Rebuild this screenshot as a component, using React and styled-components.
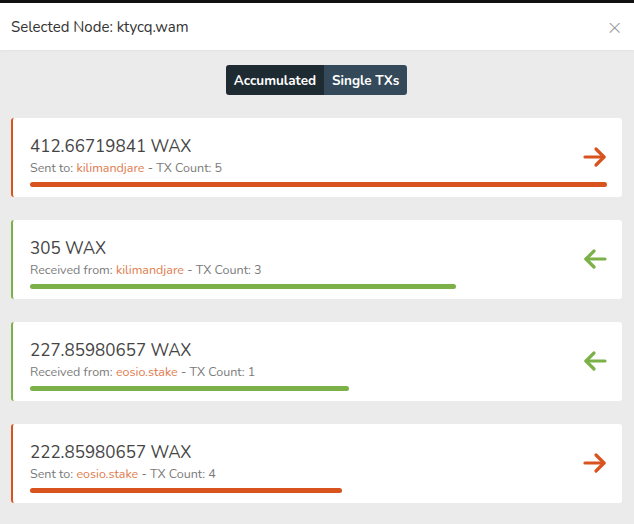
import React, { useState } from 'react';
import styled, { createGlobalStyle } from 'styled-components';

const Global = createGlobalStyle`
  html, body {
    margin: 0;
    padding: 0;
    background: #ebebeb;
    font-family: "Nunito", "Lato", "Open Sans", sans-serif;
  }
`;

const ORANGE = '#d9531e';
const GREEN = '#7cb048';

const Frame = styled.div`
  width: 634px;
  height: 524px;
  overflow: hidden;
  border-top: 3px solid #111;
  box-sizing: border-box;
  background: #ebebeb;
`;

const Header = styled.header`
  height: 47px;
  background: #fff;
  display: flex;
  align-items: center;
  justify-content: space-between;
  padding: 0 11px;
  box-shadow: 0 1px 2px rgba(0, 0, 0, 0.04);
`;

const Title = styled.h5`
  margin: 0;
  font-size: 15px;
  font-weight: 400;
  color: #333;
`;

const Close = styled.button`
  border: 0;
  background: none;
  padding: 0;
  color: #999;
  font-size: 20px;
  line-height: 1;
  cursor: pointer;
  font-family: "DejaVu Sans", sans-serif;
  font-weight: 300;
`;

const Body = styled.main`
  padding: 15px 12px 0 11px;
  display: flex;
  flex-direction: column;
`;

const Toggle = styled.div`
  align-self: center;
  display: flex;
  border-radius: 3px;
  overflow: hidden;
  margin-bottom: 23px;
`;

const ToggleBtn = styled.button`
  border: 0;
  height: 30px;
  padding: 0 8px;
  font-family: inherit;
  font-size: 13.5px;
  font-weight: 700;
  color: #fff;
  background: ${p => (p.$active ? '#1f2b33' : '#34495a')};
  cursor: pointer;
`;

const List = styled.div`
  display: flex;
  flex-direction: column;
  gap: 23px;
`;

const Card = styled.div`
  background: #fff;
  border-left: 2px solid ${p => p.$color};
  border-radius: 3px;
  height: 79px;
  box-sizing: border-box;
  padding: 19px 15px 0 17px;
  display: grid;
  grid-template-columns: 1fr auto;
  grid-template-rows: auto auto auto;
  align-content: start;
`;

const Amount = styled.div`
  font-size: 17px;
  color: #444;
  line-height: 20px;
`;

const Meta = styled.div`
  font-size: 12.5px;
  color: #7a7a7a;
  line-height: 16px;
  margin-top: 3px;
`;

const Peer = styled.span`
  color: #e07b4d;
`;

const Arrow = styled.div`
  grid-row: 1 / 3;
  grid-column: 2;
  align-self: center;
  display: flex;
`;

const Bar = styled.div`
  grid-column: 1 / 3;
  height: 5px;
  border-radius: 3px;
  margin-top: 6px;
  background: ${p => p.$color};
`;

const ArrowIcon = ({ dir, color }) => (
  <svg width="24" height="24" viewBox="0 0 24 24" fill="none" stroke={color} strokeWidth="3.2" strokeLinecap="round" strokeLinejoin="round">
    {dir === 'out' ? (
      <>
        <path d="M2 12h19" />
        <path d="M13 4l8 8-8 8" />
      </>
    ) : (
      <>
        <path d="M22 12H3" />
        <path d="M11 4l-8 8 8 8" />
      </>
    )}
  </svg>
);

const txs = [
  { amount: '412.66719841', dir: 'out', peer: 'kilimandjare', count: 5 },
  { amount: '305', dir: 'in', peer: 'kilimandjare', count: 3 },
  { amount: '227.85980657', dir: 'in', peer: 'eosio.stake', count: 1 },
  { amount: '222.85980657', dir: 'out', peer: 'eosio.stake', count: 4 },
];

const max = Math.max(...txs.map(t => parseFloat(t.amount)));

export default function App() {
  const [mode, setMode] = useState('acc');
  return (
    <Frame>
      <Global />
      <Header>
        <Title>Selected Node: ktycq.wam</Title>
        <Close aria-label="close">×</Close>
      </Header>
      <Body>
        <Toggle>
          <ToggleBtn $active={mode === 'acc'} onClick={() => setMode('acc')}>Accumulated</ToggleBtn>
          <ToggleBtn $active={mode === 'single'} onClick={() => setMode('single')}>Single TXs</ToggleBtn>
        </Toggle>
        <List>
          {txs.map((t, i) => {
            const color = t.dir === 'out' ? ORANGE : GREEN;
            return (
              <Card key={i} $color={color}>
                <Amount>{t.amount} WAX</Amount>
                <Arrow>
                  <ArrowIcon dir={t.dir} color={color} />
                </Arrow>
                <Meta>
                  {t.dir === 'out' ? 'Sent to: ' : 'Received from: '}
                  <Peer>{t.peer}</Peer> - TX Count: {t.count}
                </Meta>
                <Bar $color={color} style={{ width: `${(parseFloat(t.amount) / max) * 100}%` }} />
              </Card>
            );
          })}
        </List>
      </Body>
    </Frame>
  );
}
